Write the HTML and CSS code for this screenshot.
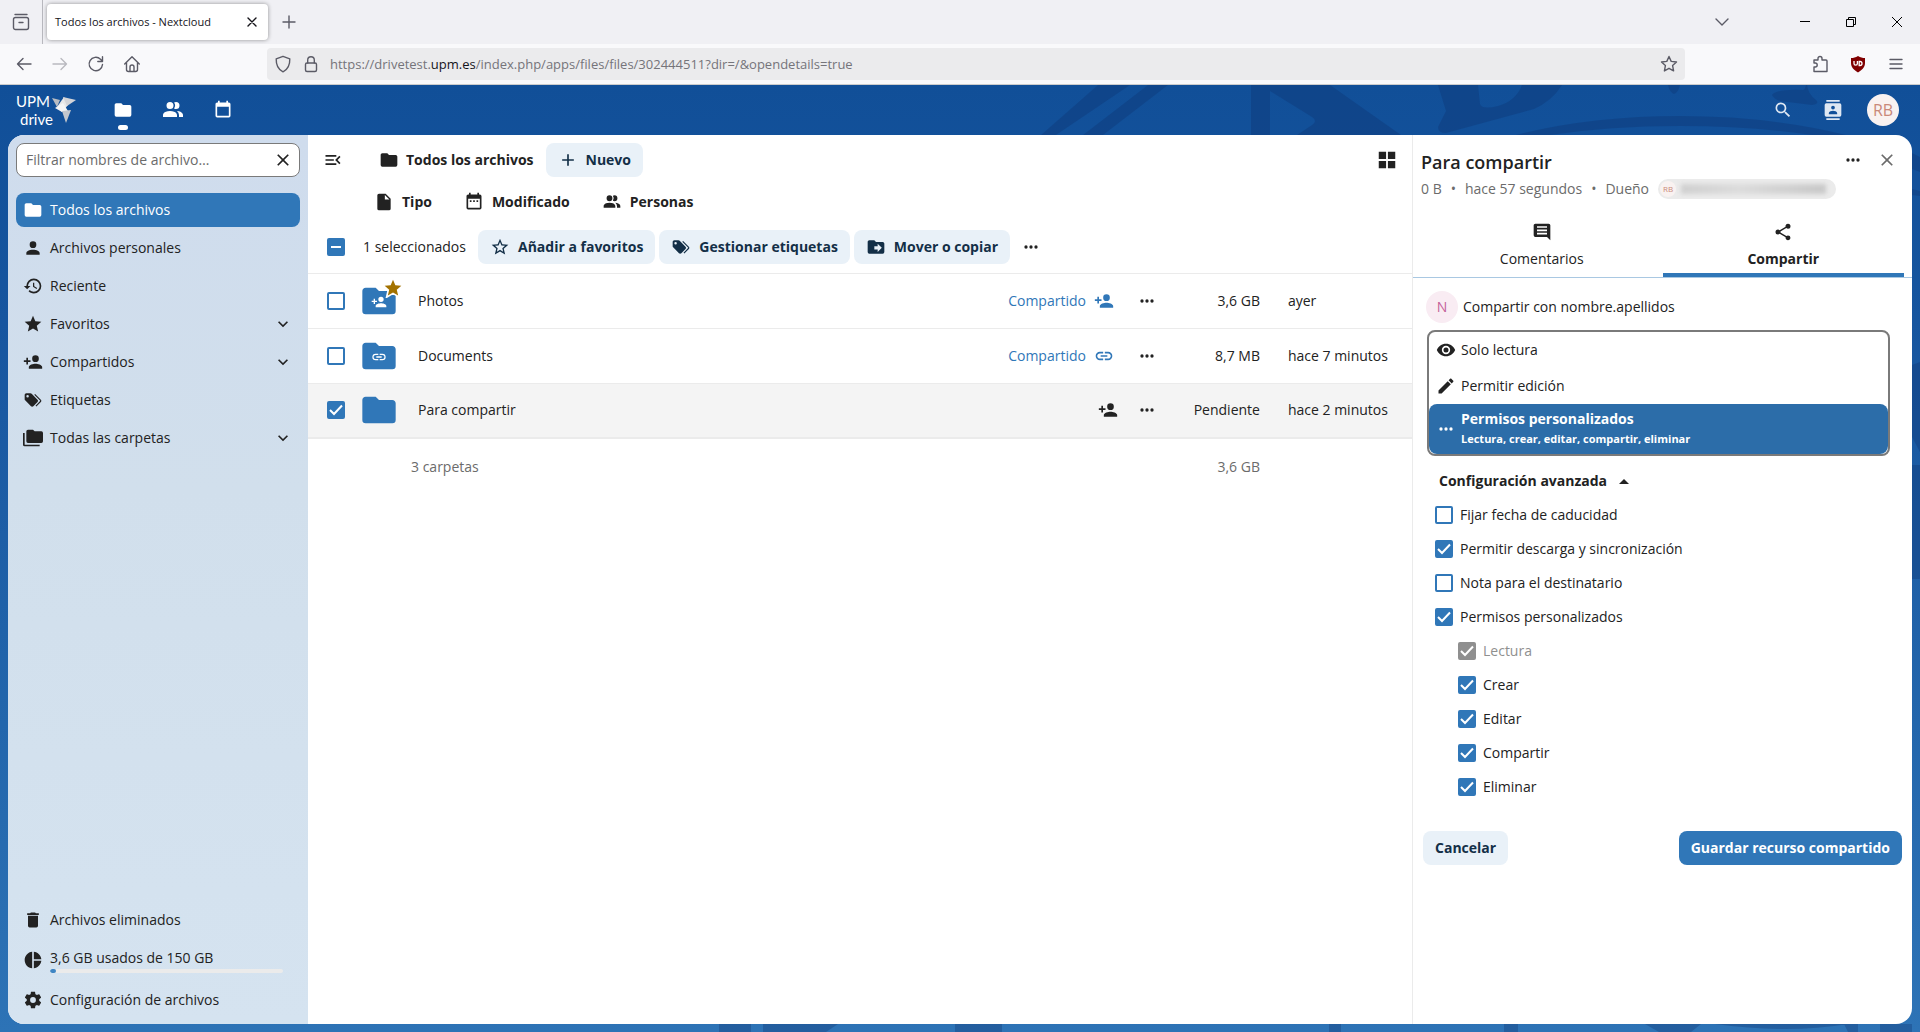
FILE: index.html
```html
<!DOCTYPE html>
<html lang="es">
<head>
    <meta charset="UTF-8">
    <meta name="viewport" content="width=device-width, initial-scale=1.0">
    <title>Todos los archivos - Nextcloud</title>
    <link rel="stylesheet" href="styles.css">
</head>
<body>

    <!-- Icon set -->
    <svg class="icon-set" aria-hidden="true">
        <symbol id="i-folder" viewBox="0 0 24 24"><path d="M10,4H4C2.89,4 2,4.89 2,6V18A2,2 0 0,0 4,20H20A2,2 0 0,0 22,18V8C22,6.89 21.1,6 20,6H12L10,4Z"/></symbol>
        <symbol id="i-account" viewBox="0 0 24 24"><path d="M12,4A4,4 0 0,1 16,8A4,4 0 0,1 12,12A4,4 0 0,1 8,8A4,4 0 0,1 12,4M12,14C16.42,14 20,15.79 20,18V20H4V18C4,15.79 7.58,14 12,14Z"/></symbol>
        <symbol id="i-people" viewBox="0 0 24 24"><path d="M16 17V19H2V17S2 13 9 13 16 17 16 17M12.5 7.5A3.5 3.5 0 1 0 9 11A3.5 3.5 0 0 0 12.5 7.5M15.94 13A5.32 5.32 0 0 1 18 17V19H22V17S22 13.37 15.94 13M15 4A3.39 3.39 0 0 0 13.07 4.59A5 5 0 0 1 13.07 10.41A3.39 3.39 0 0 0 15 11A3.5 3.5 0 0 0 15 4Z"/></symbol>
        <symbol id="i-history" viewBox="0 0 24 24"><path d="M13.5,8H12V13L16.28,15.54L17,14.33L13.5,12.25V8M13,3A9,9 0 0,0 4,12H1L4.96,16.03L9,12H6A7,7 0 0,1 13,5A7,7 0 0,1 20,12A7,7 0 0,1 13,19C11.07,19 9.32,18.21 8.06,16.94L6.64,18.36C8.27,20 10.5,21 13,21A9,9 0 0,0 22,12A9,9 0 0,0 13,3"/></symbol>
        <symbol id="i-star" viewBox="0 0 24 24"><path d="M12,17.27L18.18,21L16.54,13.97L22,9.24L14.81,8.62L12,2L9.19,8.62L2,9.24L7.45,13.97L5.82,21L12,17.27Z"/></symbol>
        <symbol id="i-star-outline" viewBox="0 0 24 24"><path d="M12,15.39L8.24,17.66L9.23,13.38L5.91,10.5L10.29,10.13L12,6.09L13.71,10.13L18.09,10.5L14.77,13.38L15.76,17.66M22,9.24L14.81,8.63L12,2L9.19,8.63L2,9.24L7.45,13.97L5.82,21L12,17.27L18.18,21L16.54,13.97L22,9.24Z"/></symbol>
        <symbol id="i-account-plus" viewBox="0 0 24 24"><path d="M15,14C12.33,14 7,15.33 7,18V20H23V18C23,15.33 17.67,14 15,14M6,10V7H4V10H1V12H4V15H6V12H9V10M15,12A4,4 0 0,0 19,8A4,4 0 0,0 15,4A4,4 0 0,0 11,8A4,4 0 0,0 15,12Z"/></symbol>
        <symbol id="i-tags" viewBox="0 0 24 24"><path d="M5.5,9A1.5,1.5 0 0,0 7,7.5A1.5,1.5 0 0,0 5.5,6A1.5,1.5 0 0,0 4,7.5A1.5,1.5 0 0,0 5.5,9M17.41,11.58C17.77,11.94 18,12.44 18,13C18,13.55 17.78,14.05 17.41,14.41L12.41,19.41C12.05,19.77 11.55,20 11,20C10.45,20 9.95,19.78 9.58,19.41L2.59,12.42C2.22,12.05 2,11.55 2,11V6C2,4.89 2.89,4 4,4H9C9.55,4 10.05,4.22 10.41,4.58L17.41,11.58M13.54,5.71L14.54,4.71L21.41,11.58C21.78,11.94 22,12.45 22,13C22,13.55 21.78,14.05 21.42,14.41L16.04,19.79L15.04,18.79L20.75,13L13.54,5.71Z"/></symbol>
        <symbol id="i-folders" viewBox="0 0 24 24"><path d="M22,4H14L12,2H6A2,2 0 0,0 4,4V16A2,2 0 0,0 6,18H22A2,2 0 0,0 24,16V6A2,2 0 0,0 22,4M2,6H0V11H0V20A2,2 0 0,0 2,22H20V20H2V6Z"/></symbol>
        <symbol id="i-trash" viewBox="0 0 24 24"><path d="M19,4H15.5L14.5,3H9.5L8.5,4H5V6H19M6,19A2,2 0 0,0 8,21H16A2,2 0 0,0 18,19V7H6V19Z"/></symbol>
        <symbol id="i-pie" viewBox="0 0 24 24"><path d="M11,2V22C5.9,21.5 2,17.2 2,12C2,6.8 5.9,2.5 11,2M13,2V11H22C21.5,6.2 17.8,2.5 13,2M13,13V22C17.7,21.5 21.5,17.8 22,13H13Z"/></symbol>
        <symbol id="i-cog" viewBox="0 0 24 24"><path d="M12,15.5A3.5,3.5 0 0,1 8.5,12A3.5,3.5 0 0,1 12,8.5A3.5,3.5 0 0,1 15.5,12A3.5,3.5 0 0,1 12,15.5M19.43,12.97C19.47,12.65 19.5,12.33 19.5,12C19.5,11.67 19.47,11.34 19.43,11L21.54,9.37C21.73,9.22 21.78,8.95 21.66,8.73L19.66,5.27C19.54,5.05 19.27,4.96 19.05,5.05L16.56,6.05C16.04,5.66 15.5,5.32 14.87,5.07L14.5,2.42C14.46,2.18 14.25,2 14,2H10C9.75,2 9.54,2.18 9.5,2.42L9.13,5.07C8.5,5.32 7.96,5.66 7.44,6.05L4.95,5.05C4.73,4.96 4.46,5.05 4.34,5.27L2.34,8.73C2.21,8.95 2.27,9.22 2.46,9.37L4.57,11C4.53,11.34 4.5,11.67 4.5,12C4.5,12.33 4.53,12.65 4.57,12.97L2.46,14.63C2.27,14.78 2.21,15.05 2.34,15.27L4.34,18.73C4.46,18.95 4.73,19.03 4.95,18.95L7.44,17.94C7.96,18.34 8.5,18.68 9.13,18.93L9.5,21.58C9.54,21.82 9.75,22 10,22H14C14.25,22 14.46,21.82 14.5,21.58L14.87,18.93C15.5,18.67 16.04,18.34 16.56,17.94L19.05,18.95C19.27,19.03 19.54,18.95 19.66,18.73L21.66,15.27C21.78,15.05 21.73,14.78 21.54,14.63L19.43,12.97Z"/></symbol>
        <symbol id="i-menu-open" viewBox="0 0 24 24"><path d="M21,15.61L19.59,17L14.58,12L19.59,7L21,8.39L17.44,12L21,15.61M3,6H16V8H3V6M3,13V11H13V13H3M3,18V16H16V18H3Z"/></symbol>
        <symbol id="i-plus" viewBox="0 0 24 24"><path d="M19,13H13V19H11V13H5V11H11V5H13V11H19V13Z"/></symbol>
        <symbol id="i-file" viewBox="0 0 24 24"><path d="M13,9V3.5L18.5,9M6,2C4.89,2 4,2.89 4,4V20A2,2 0 0,0 6,22H18A2,2 0 0,0 20,20V8L14,2H6Z"/></symbol>
        <symbol id="i-calendar" viewBox="0 0 24 24"><path d="M19,19H5V8H19M16,1V3H8V1H6V3H5C3.89,3 3,3.89 3,5V19A2,2 0 0,0 5,21H19A2,2 0 0,0 21,19V5C21,3.89 20.1,3 19,3H18V1"/></symbol>
        <symbol id="i-calendar-range" viewBox="0 0 24 24"><path d="M9,10H7V12H9V10M13,10H11V12H13V10M17,10H15V12H17V10M19,3H18V1H16V3H8V1H6V3H5C3.89,3 3,3.9 3,5V19A2,2 0 0,0 5,21H19A2,2 0 0,0 21,19V5A2,2 0 0,0 19,3M19,19H5V8H19V19Z"/></symbol>
        <symbol id="i-folder-move" viewBox="0 0 24 24"><path d="M14,18V15H10V11H14V8L19,13M20,6H12L10,4H4C2.89,4 2,4.89 2,6V18A2,2 0 0,0 4,20H20A2,2 0 0,0 22,18V8C22,6.89 21.1,6 20,6Z"/></symbol>
        <symbol id="i-dots" viewBox="0 0 24 24"><circle cx="6" cy="12" r="2"/><circle cx="12" cy="12" r="2"/><circle cx="18" cy="12" r="2"/></symbol>
        <symbol id="i-link" viewBox="0 0 24 24"><path d="M3.9,12C3.9,10.29 5.29,8.9 7,8.9H11V7H7A5,5 0 0,0 2,12A5,5 0 0,0 7,17H11V15.1H7C5.29,15.1 3.9,13.71 3.9,12M8,13H16V11H8V13M17,7H13V8.9H17C18.71,8.9 20.1,10.29 20.1,12C20.1,13.71 18.71,15.1 17,15.1H13V17H17A5,5 0 0,0 22,12A5,5 0 0,0 17,7Z"/></symbol>
        <symbol id="i-grid" viewBox="0 0 24 24"><path d="M3,11H11V3H3M3,21H11V13H3M13,21H21V13H13M13,3V11H21V3"/></symbol>
        <symbol id="i-close" viewBox="0 0 24 24"><path d="M19,6.41L17.59,5L12,10.59L6.41,5L5,6.41L10.59,12L5,17.59L6.41,19L12,13.41L17.59,19L19,17.59L13.41,12L19,6.41Z"/></symbol>
        <symbol id="i-comment" viewBox="0 0 24 24"><path fill-rule="evenodd" d="M4,2H20A2,2 0 0,1 22,4V22L18,18H4A2,2 0 0,1 2,16V4C2,2.89 2.9,2 4,2M6,5H18V7H6V5M6,9H18V11H6V9M6,13H18V15H6V13Z"/></symbol>
        <symbol id="i-share" viewBox="0 0 24 24"><path d="M18,16.08C17.24,16.08 16.56,16.38 16.04,16.85L8.91,12.7C8.96,12.47 9,12.24 9,12C9,11.76 8.96,11.53 8.91,11.3L15.96,7.19C16.5,7.69 17.21,8 18,8A3,3 0 0,0 21,5A3,3 0 0,0 18,2A3,3 0 0,0 15,5C15,5.24 15.04,5.47 15.09,5.7L8.04,9.81C7.5,9.31 6.79,9 6,9A3,3 0 0,0 3,12A3,3 0 0,0 6,15C6.79,15 7.5,14.69 8.04,14.19L15.16,18.34C15.11,18.55 15.08,18.77 15.08,19C15.08,20.61 16.39,21.91 18,21.91C19.61,21.91 20.92,20.61 20.92,19A2.92,2.92 0 0,0 18,16.08Z"/></symbol>
        <symbol id="i-eye" viewBox="0 0 24 24"><path d="M12,9A3,3 0 0,0 9,12A3,3 0 0,0 12,15A3,3 0 0,0 15,12A3,3 0 0,0 12,9M12,17A5,5 0 0,1 7,12A5,5 0 0,1 12,7A5,5 0 0,1 17,12A5,5 0 0,1 12,17M12,4.5C7,4.5 2.73,7.61 1,12C2.73,16.39 7,19.5 12,19.5C17,19.5 21.27,16.39 23,12C21.27,7.61 17,4.5 12,4.5Z"/></symbol>
        <symbol id="i-pencil" viewBox="0 0 24 24"><path d="M20.71,7.04C21.1,6.65 21.1,6 20.71,5.63L18.37,3.29C18,2.9 17.35,2.9 16.96,3.29L15.12,5.12L18.87,8.87M3,17.25V21H6.75L17.81,9.93L14.06,6.18L3,17.25Z"/></symbol>
        <symbol id="i-search" viewBox="0 0 24 24"><path d="M9.5,3A6.5,6.5 0 0,1 16,9.5C16,11.11 15.41,12.59 14.44,13.73L14.71,14H15.5L20.5,19L19,20.5L14,15.5V14.71L13.73,14.44C12.59,15.41 11.11,16 9.5,16A6.5,6.5 0 0,1 3,9.5A6.5,6.5 0 0,1 9.5,3M9.5,5C7,5 5,7 5,9.5C5,12 7,14 9.5,14C12,14 14,12 14,9.5C14,7 12,5 9.5,5Z"/></symbol>
        <symbol id="i-contacts" viewBox="0 0 24 24"><path d="M20,0H4V2H20V0M4,24H20V22H4V24M20,4H4A2,2 0 0,0 2,6V18A2,2 0 0,0 4,20H20A2,2 0 0,0 22,18V6A2,2 0 0,0 20,4M12,6.75A2.25,2.25 0 0,1 14.25,9A2.25,2.25 0 0,1 12,11.25A2.25,2.25 0 0,1 9.75,9A2.25,2.25 0 0,1 12,6.75M17,17H7V15.5C7,13.83 10.33,13 12,13C13.67,13 17,13.83 17,15.5V17Z"/></symbol>
        <symbol id="i-chevron" viewBox="0 0 24 24"><path d="M7.41,8.58L12,13.17L16.59,8.58L18,10L12,16L6,10L7.41,8.58Z"/></symbol>
        <symbol id="i-menu-up" viewBox="0 0 20 20"><path d="M5,13L10,8L15,13H5Z"/></symbol>
    </svg>

    <!-- Browser tabs -->
    <div class="tab-bar">
        <button class="chrome-btn recent-btn" aria-label="Ver pestañas recientes">
            <svg class="line-icon" viewBox="0 0 18 18"><path d="M3 1.5h12"/><rect x="1.5" y="4.5" width="15" height="12" rx="2"/><path d="M7 9.5h4"/></svg>
        </button>
        <div class="tab">
            <span class="tab-title">Todos los archivos - Nextcloud</span>
            <button class="chrome-btn tab-close" aria-label="Cerrar pestaña">
                <svg class="line-icon dark" viewBox="0 0 18 18"><path d="M5 5l8 8M13 5l-8 8"/></svg>
            </button>
        </div>
        <button class="chrome-btn new-tab" aria-label="Nueva pestaña">
            <svg class="line-icon" viewBox="0 0 18 18"><path d="M9 3v12M3 9h12"/></svg>
        </button>
        <div class="window-controls">
            <button class="chrome-btn list-tabs" aria-label="Listar pestañas">
                <svg class="line-icon" viewBox="0 0 18 18"><path d="M3 6l6 6 6-6"/></svg>
            </button>
            <button class="chrome-btn" aria-label="Minimizar">
                <svg class="line-icon thin" viewBox="0 0 18 18"><path d="M4 8.5h10"/></svg>
            </button>
            <button class="chrome-btn" aria-label="Restaurar">
                <svg class="line-icon thin" viewBox="0 0 18 18"><path d="M4.5 6.5h7v7h-7zM6.5 6.5v-2h7v7h-2"/></svg>
            </button>
            <button class="chrome-btn" aria-label="Cerrar">
                <svg class="line-icon thin" viewBox="0 0 18 18"><path d="M4 4l10 10M14 4L4 14"/></svg>
            </button>
        </div>
    </div>

    <!-- Browser toolbar -->
    <div class="toolbar">
        <div class="nav-buttons">
            <button class="chrome-btn" aria-label="Atrás">
                <svg class="line-icon" viewBox="0 0 18 18"><path d="M16 9H2.5M8 3.5L2.5 9 8 14.5"/></svg>
            </button>
            <button class="chrome-btn" aria-label="Adelante" disabled>
                <svg class="line-icon" viewBox="0 0 18 18"><path d="M2 9h13.5M10 3.5L15.5 9 10 14.5"/></svg>
            </button>
            <button class="chrome-btn" aria-label="Recargar">
                <svg class="line-icon" viewBox="0 0 18 18"><path d="M15.5 9.5A6.7 6.7 0 1 1 13.5 4.2L15 5.7M15.5 1.8V6.5H10.8"/></svg>
            </button>
            <button class="chrome-btn" aria-label="Inicio">
                <svg class="line-icon" viewBox="0 0 18 18"><path d="M1.7 9L9 1.8 16.3 9M3.5 7.5V14.5a2 2 0 0 0 2 2h7a2 2 0 0 0 2-2V7.5M7 16.5V12a2 2 0 0 1 4 0v4.5"/></svg>
            </button>
        </div>
        <div class="url-bar">
            <svg class="line-icon" viewBox="0 0 18 18"><path d="M9 1.3L15.8 3.8C16 10 14 14.5 9 16.8 4 14.5 2 10 2.2 3.8z"/></svg>
            <svg class="line-icon" viewBox="0 0 18 18"><rect x="3.5" y="8" width="11" height="8.5" rx="1.5"/><path d="M5.7 8V5a3.3 3.3 0 0 1 6.6 0v3"/></svg>
            <div class="url" role="textbox" aria-label="Dirección" contenteditable="true" spellcheck="false">https://drivetest.<span class="url-host">upm.es</span>/index.php/apps/files/files/302444511?dir=/&amp;opendetails=true</div>
            <button class="chrome-btn bookmark" aria-label="Añadir a marcadores">
                <svg class="line-icon" viewBox="0 0 18 18"><path d="M9 1.5l2.2 4.9 5.3.6-3.9 3.600 1 5.300L9 13.300l-4.600 2.600 1-5.300L1.500 7l5.300-.6z"/></svg>
            </button>
        </div>
        <div class="toolbar-end">
            <button class="chrome-btn" aria-label="Extensiones">
                <svg class="line-icon" viewBox="0 0 18 18"><path d="M3 16.5V12h1.200a2 2 0 1 0 0-4H3V5h4V3.500a2 2 0 0 1 4 0V5h4a1 1 0 0 1 1 1v10.500z"/></svg>
            </button>
            <button class="chrome-btn" aria-label="uBlock Origin">
                <svg class="ublock" viewBox="0 0 18 18"><path fill="#800000" d="M9 1C6.5 2.5 4.5 3 2 3v5c0 4.500 3 7 7 9.500 4-2.500 7-5 7-9.500V3C13.500 3 11.500 2.500 9 1z"/><path fill="none" stroke="#fff" stroke-width="1.3" d="M5 6v2.500a1.700 1.700 0 0 0 3.400 0V6M10.200 6.500h.8a2 2 0 0 1 0 4h-.8z"/></svg>
            </button>
            <button class="chrome-btn" aria-label="Menú">
                <svg class="line-icon" viewBox="0 0 18 18"><path d="M3 4.5h12M3 9h12M3 13.5h12"/></svg>
            </button>
        </div>
    </div>

    <!-- Nextcloud -->
    <div class="app">
        <svg class="backdrop" viewBox="0 0 1920 947" preserveAspectRatio="xMaxYMin slice" aria-hidden="true">
            <path d="M1098 0h32L1056 50h-15zM1148 0h20l-65 50h-20z"/>
            <path d="M1251 0h79l71 50h-104l15-10q6-4 0-8L1270 6v44h-19z"/>
            <path fill-rule="evenodd" d="M1438 0h124q-10 16-28 24L1446 48q-8 0-8-6l8-16zM1478 0h44q-6 16-24 21-16 4-18-2z"/>
            <path d="M1668 0h12q-2 8-6 9-4-1-6-9zM1806 0q-1 5-3 5-28-1-31 5 4 7 16 7l24 3q8-1 4-5-8-6-9-15z"/>
            <path d="M1516 50Q1590 31 1680 31T1846 50h-34Q1750 41 1680 41T1550 50z"/>
            <path d="M1912 68l8 4v15l-8-3zM1912 104l8 2v5l-8-1zM1912 280l8-3v90l-8-15zM1912 380h8v114h-8z"/>
            <path d="M719 939h32v8h-32zM763 939h75l-12 8h-63zM955 939h47v8h-47zM1329 939h12v8h-12zM1504 939h14v8h-14zM1645 939h56l-10 8h-32zM1715 939h133q-60 10-133 0zM1844 939h14v8h-10zM1880 939h32v8h-32z"/>
        </svg>

        <header class="app-header">
            <a class="logo" href="#" aria-label="UPM drive">
                <span class="logo-text"><span>UPM</span><span class="logo-drive">drive</span></span>
                <svg class="logo-bird" viewBox="0 0 24 28"><path fill="#b9bcc2" d="M0 2l8 2-3 7z"/><path fill="#e8e8e8" d="M5 11L12 1l4 8-6 7z"/><path fill="#d3d4d8" d="M11 1l13 3-9 6z"/><path fill="#f5f5f5" d="M3 12l8-5 5 8-6 1z"/><path fill="#c4c7cd" d="M10 15l9-1-5 13z"/></svg>
            </a>
            <nav class="app-menu">
                <a class="active" href="#" aria-label="Archivos"><svg class="icon"><use href="#i-folder"/></svg></a>
                <a href="#" aria-label="Contactos"><svg class="icon large"><use href="#i-people"/></svg></a>
                <a href="#" aria-label="Calendario"><svg class="icon"><use href="#i-calendar"/></svg></a>
            </nav>
            <div class="header-end">
                <button aria-label="Buscar"><svg class="icon"><use href="#i-search"/></svg></button>
                <button aria-label="Buscar contactos"><svg class="icon"><use href="#i-contacts"/></svg></button>
                <button class="user-avatar" aria-label="Ajustes">RB</button>
            </div>
        </header>

        <div class="content">
            <!-- Navigation -->
            <nav class="sidebar">
                <div class="filter-box">
                    <input type="text" placeholder="Filtrar nombres de archivo…" aria-label="Filtrar nombres de archivo">
                    <button aria-label="Limpiar"><svg class="icon"><use href="#i-close"/></svg></button>
                </div>
                <ul class="nav-list">
                    <li><a class="active" href="#"><svg class="icon"><use href="#i-folder"/></svg>Todos los archivos</a></li>
                    <li><a href="#"><svg class="icon"><use href="#i-account"/></svg>Archivos personales</a></li>
                    <li><a href="#"><svg class="icon"><use href="#i-history"/></svg>Reciente</a></li>
                    <li><a href="#"><svg class="icon"><use href="#i-star"/></svg>Favoritos<svg class="icon chevron"><use href="#i-chevron"/></svg></a></li>
                    <li><a href="#"><svg class="icon"><use href="#i-account-plus"/></svg>Compartidos<svg class="icon chevron"><use href="#i-chevron"/></svg></a></li>
                    <li><a href="#"><svg class="icon"><use href="#i-tags"/></svg>Etiquetas</a></li>
                    <li><a href="#"><svg class="icon"><use href="#i-folders"/></svg>Todas las carpetas<svg class="icon chevron"><use href="#i-chevron"/></svg></a></li>
                </ul>
                <ul class="nav-list nav-bottom">
                    <li><a href="#"><svg class="icon"><use href="#i-trash"/></svg>Archivos eliminados</a></li>
                    <li>
                        <a class="quota" href="#">
                            <svg class="icon"><use href="#i-pie"/></svg>
                            <span class="quota-body">
                                <span>3,6 GB usados de 150 GB</span>
                                <span class="quota-bar"><span class="quota-used" style="width: 2.4%"></span></span>
                            </span>
                        </a>
                    </li>
                    <li><a href="#"><svg class="icon"><use href="#i-cog"/></svg>Configuración de archivos</a></li>
                </ul>
            </nav>

            <!-- File list -->
            <main class="files">
                <div class="files-header">
                    <button class="icon-btn" aria-label="Cerrar navegación"><svg class="icon"><use href="#i-menu-open"/></svg></button>
                    <a class="crumb" href="#"><svg class="icon"><use href="#i-folder"/></svg>Todos los archivos</a>
                    <button class="btn"><svg class="icon"><use href="#i-plus"/></svg>Nuevo</button>
                    <button class="icon-btn grid-btn" aria-label="Cambiar a vista de cuadrícula"><svg class="icon"><use href="#i-grid"/></svg></button>
                </div>
                <div class="filters">
                    <button><svg class="icon"><use href="#i-file"/></svg>Tipo</button>
                    <button><svg class="icon"><use href="#i-calendar-range"/></svg>Modificado</button>
                    <button><svg class="icon"><use href="#i-people"/></svg>Personas</button>
                </div>

                <table class="file-table">
                    <colgroup>
                        <col class="col-check">
                        <col class="col-icon">
                        <col>
                        <col class="col-actions">
                        <col class="col-size">
                        <col class="col-mtime">
                    </colgroup>
                    <thead>
                        <tr>
                            <th class="cell-check"><input type="checkbox" class="mixed" aria-label="Seleccionar todo"></th>
                            <th colspan="5">
                                <div class="bulk-actions">
                                    <span class="selected-count">1 seleccionados</span>
                                    <button class="btn"><svg class="icon"><use href="#i-star-outline"/></svg>Añadir a favoritos</button>
                                    <button class="btn"><svg class="icon"><use href="#i-tags"/></svg>Gestionar etiquetas</button>
                                    <button class="btn"><svg class="icon"><use href="#i-folder-move"/></svg>Mover o copiar</button>
                                    <button class="icon-btn" aria-label="Acciones"><svg class="icon"><use href="#i-dots"/></svg></button>
                                </div>
                            </th>
                        </tr>
                    </thead>
                    <tbody>
                        <tr>
                            <td class="cell-check"><input type="checkbox" aria-label="Seleccionar Photos"></td>
                            <td>
                                <span class="folder">
                                    <svg class="folder-icon"><use href="#i-folder"/></svg>
                                    <svg class="folder-overlay"><use href="#i-account-plus"/></svg>
                                    <svg class="folder-star"><use href="#i-star"/></svg>
                                </span>
                            </td>
                            <td><a class="file-name" href="#">Photos</a></td>
                            <td>
                                <div class="row-actions">
                                    <button class="shared">Compartido<svg class="icon"><use href="#i-account-plus"/></svg></button>
                                    <button class="icon-btn" aria-label="Acciones"><svg class="icon"><use href="#i-dots"/></svg></button>
                                </div>
                            </td>
                            <td class="cell-size">3,6 GB</td>
                            <td class="cell-mtime">ayer</td>
                        </tr>
                        <tr>
                            <td class="cell-check"><input type="checkbox" aria-label="Seleccionar Documents"></td>
                            <td>
                                <span class="folder">
                                    <svg class="folder-icon"><use href="#i-folder"/></svg>
                                    <svg class="folder-overlay"><use href="#i-link"/></svg>
                                </span>
                            </td>
                            <td><a class="file-name" href="#">Documents</a></td>
                            <td>
                                <div class="row-actions">
                                    <button class="shared">Compartido<svg class="icon"><use href="#i-link"/></svg></button>
                                    <button class="icon-btn" aria-label="Acciones"><svg class="icon"><use href="#i-dots"/></svg></button>
                                </div>
                            </td>
                            <td class="cell-size">8,7 MB</td>
                            <td class="cell-mtime">hace 7 minutos</td>
                        </tr>
                        <tr class="selected">
                            <td class="cell-check"><input type="checkbox" aria-label="Seleccionar Para compartir" checked></td>
                            <td>
                                <span class="folder">
                                    <svg class="folder-icon"><use href="#i-folder"/></svg>
                                </span>
                            </td>
                            <td><a class="file-name" href="#">Para compartir</a></td>
                            <td>
                                <div class="row-actions">
                                    <button class="icon-btn" aria-label="Compartir"><svg class="icon"><use href="#i-account-plus"/></svg></button>
                                    <button class="icon-btn" aria-label="Acciones"><svg class="icon"><use href="#i-dots"/></svg></button>
                                </div>
                            </td>
                            <td class="cell-size">Pendiente</td>
                            <td class="cell-mtime">hace 2 minutos</td>
                        </tr>
                    </tbody>
                    <tfoot>
                        <tr>
                            <td></td>
                            <td colspan="3" class="summary">3 carpetas</td>
                            <td class="cell-size">3,6 GB</td>
                            <td></td>
                        </tr>
                    </tfoot>
                </table>
            </main>

            <!-- Details -->
            <aside class="details">
                <div class="details-title">
                    <h2>Para compartir</h2>
                    <button class="icon-btn" aria-label="Acciones"><svg class="icon"><use href="#i-dots"/></svg></button>
                    <button class="icon-btn close-btn" aria-label="Cerrar barra lateral"><svg class="icon"><use href="#i-close"/></svg></button>
                </div>
                <div class="details-sub">
                    <span>0 B</span><span>•</span><span>hace 57 segundos</span><span>•</span><span>Dueño</span>
                    <span class="owner"><span class="owner-avatar">RB</span><span class="owner-name"></span></span>
                </div>
                <div class="tabs" role="tablist">
                    <button role="tab" aria-selected="false"><svg class="icon"><use href="#i-comment"/></svg>Comentarios</button>
                    <button role="tab" aria-selected="true"><svg class="icon"><use href="#i-share"/></svg>Compartir</button>
                </div>

                <form class="share-form">
                    <div class="share-target">
                        <span class="target-avatar">N</span>
                        <span>Compartir con nombre.apellidos</span>
                    </div>
                    <div class="permissions">
                        <button type="button"><svg class="icon"><use href="#i-eye"/></svg>Solo lectura</button>
                        <button type="button"><svg class="icon"><use href="#i-pencil"/></svg>Permitir edición</button>
                        <button type="button" class="chosen">
                            <svg class="icon"><use href="#i-dots"/></svg>
                            <span class="chosen-text">Permisos personalizados<small>Lectura, crear, editar, compartir, eliminar</small></span>
                        </button>
                    </div>
                    <button type="button" class="advanced">Configuración avanzada<svg class="icon"><use href="#i-menu-up"/></svg></button>
                    <div class="options">
                        <label><input type="checkbox">Fijar fecha de caducidad</label>
                        <label><input type="checkbox" checked>Permitir descarga y sincronización</label>
                        <label><input type="checkbox">Nota para el destinatario</label>
                        <label><input type="checkbox" checked>Permisos personalizados</label>
                        <div class="sub-options">
                            <label class="disabled"><input type="checkbox" checked disabled>Lectura</label>
                            <label><input type="checkbox" checked>Crear</label>
                            <label><input type="checkbox" checked>Editar</label>
                            <label><input type="checkbox" checked>Compartir</label>
                            <label><input type="checkbox" checked>Eliminar</label>
                        </div>
                    </div>
                    <div class="form-buttons">
                        <button type="button" class="btn">Cancelar</button>
                        <button type="submit" class="btn primary">Guardar recurso compartido</button>
                    </div>
                </form>
            </aside>
        </div>
    </div>

</body>
</html>
```

FILE: styles.css
```css
* {
    box-sizing: border-box;
}

body {
    margin: 0;
    height: 100vh;
    display: flex;
    flex-direction: column;
    overflow: hidden;
    font-family: "Open Sans", "Noto Sans", sans-serif;
    font-size: 14px;
    line-height: 20px;
    color: #222;
}

button, input {
    font: inherit;
    color: inherit;
}

button {
    padding: 0;
    border: none;
    background: none;
    cursor: pointer;
}

a {
    color: inherit;
    text-decoration: none;
}

.icon-set {
    display: none;
}

.icon {
    width: 20px;
    height: 20px;
    flex: none;
    fill: currentColor;
}

.icon.large {
    width: 24px;
    height: 24px;
}

/* Browser tabs */
.chrome-btn {
    width: 36px;
    height: 32px;
    display: flex;
    align-items: center;
    justify-content: center;
    flex: none;
    color: #5b5b66;
}

.chrome-btn:disabled {
    opacity: 0.4;
}

.line-icon {
    width: 18px;
    height: 18px;
    flex: none;
    fill: none;
    stroke: #5b5b66;
    stroke-width: 1.4;
    stroke-linecap: round;
    stroke-linejoin: round;
}

.line-icon.dark {
    stroke: #15141a;
}

.line-icon.thin {
    stroke: #000;
    stroke-width: 1;
    stroke-linecap: butt;
    stroke-linejoin: miter;
}

.tab-bar {
    height: 44px;
    flex: none;
    display: flex;
    align-items: center;
    background-color: #f0f0f4;
}

.recent-btn {
    width: 43px;
    height: 44px;
    border-right: 1px solid #b8b8be;
}

.tab {
    width: 221px;
    height: 36px;
    margin: 0 3px 0 4px;
    padding: 0 0 0 8px;
    display: flex;
    align-items: center;
    justify-content: space-between;
    border-radius: 4px;
    background-color: #fff;
    box-shadow: 0 0 4px rgba(0, 0, 0, 0.4);
}

.tab-title {
    font-size: 11px;
    color: #15141a;
}

.tab-close {
    width: 32px;
}

.window-controls {
    margin-left: auto;
    display: flex;
}

.window-controls .chrome-btn {
    width: 46px;
}

.window-controls .list-tabs {
    margin-right: 37px;
}

/* Browser toolbar */
.toolbar {
    height: 41px;
    flex: none;
    display: flex;
    align-items: center;
    background-color: #f9f9fb;
    border-bottom: 1px solid #ccc;
}

.nav-buttons {
    width: 267px;
    padding-left: 6px;
    display: flex;
}

.url-bar {
    flex: 1;
    height: 32px;
    padding: 0 0 0 7px;
    display: flex;
    align-items: center;
    gap: 10px;
    border-radius: 4px;
    background-color: #ebebed;
}

.url {
    flex: 1;
    font-size: 13px;
    color: #75747a;
    white-space: nowrap;
}

.url-host {
    color: #15141a;
}

.bookmark {
    width: 32px;
}

.toolbar-end {
    width: 235px;
    padding-right: 6px;
    display: flex;
    justify-content: flex-end;
    gap: 2px;
}

.ublock {
    width: 18px;
    height: 18px;
}

/* App shell */
.app {
    position: relative;
    flex: 1;
    min-height: 0;
    display: flex;
    flex-direction: column;
    background: linear-gradient(#114f98, #16559f 25%, #2d73b6);
}

.backdrop {
    position: absolute;
    inset: 0;
    width: 100%;
    height: 100%;
    fill: #0d2f6b;
    fill-opacity: 0.3;
}

.app-header {
    position: relative;
    height: 50px;
    flex: none;
    padding: 0 12px 0 16px;
    display: flex;
    align-items: center;
    color: #fff;
}

.logo {
    width: 82px;
    display: flex;
    align-items: center;
}

.logo-text {
    width: 36px;
    display: flex;
    flex-direction: column;
    font-family: Lato, sans-serif;
    font-size: 15px;
    font-weight: 400;
    line-height: 18px;
}

.logo-drive {
    padding-left: 4px;
}

.logo-bird {
    width: 24px;
    height: 28px;
}

.app-menu {
    display: flex;
}

.app-menu a {
    width: 50px;
    height: 50px;
    display: flex;
    flex-direction: column;
    align-items: center;
    justify-content: center;
}

.app-menu .active {
    gap: 5px;
    padding-top: 10px;
}

.app-menu .active::after {
    content: "";
    width: 10px;
    height: 5px;
    border-radius: 3px;
    background-color: #fff;
}

.header-end {
    margin-left: auto;
    display: flex;
    align-items: center;
}

.header-end button {
    width: 50px;
    height: 50px;
    display: flex;
    align-items: center;
    justify-content: center;
    color: #dfe8f3;
}

.header-end .user-avatar {
    width: 32px;
    height: 32px;
    margin: 0 9px;
    border-radius: 50%;
    background-color: #f9f2f1;
    color: #c98879;
    font-size: 16px;
}

.content {
    position: relative;
    flex: 1;
    min-height: 0;
    margin: 0 8px 8px;
    display: flex;
    border-radius: 16px;
    overflow: hidden;
    background-color: #fff;
}

/* Sidebar */
.sidebar {
    width: 300px;
    flex: none;
    padding: 8px 8px 7px;
    display: flex;
    flex-direction: column;
    background: linear-gradient(#cfdced, #d1dfec 40%, #d5e3f0);
}

.filter-box {
    height: 34px;
    margin-bottom: 16px;
    display: flex;
    align-items: center;
    border: 1px solid #7a7a7a;
    border-radius: 8px;
    background-color: #fff;
}

.filter-box input {
    flex: 1;
    min-width: 0;
    padding: 0 9px;
    border: none;
    outline: none;
    background: none;
}

.filter-box input::placeholder {
    color: #6b6b6b;
}

.filter-box button {
    width: 32px;
    height: 32px;
    display: flex;
    align-items: center;
    justify-content: center;
}

.nav-list {
    margin: 0;
    padding: 0;
    list-style: none;
    display: flex;
    flex-direction: column;
    gap: 4px;
}

.nav-list a {
    height: 34px;
    padding: 0 7px;
    display: flex;
    align-items: center;
    gap: 7px;
    border-radius: 8px;
}

.nav-list .active {
    background-color: #3077b8;
    color: #fff;
}

.chevron {
    margin-left: auto;
}

.nav-bottom {
    margin-top: auto;
}

.nav-list .quota {
    height: 38px;
}

.quota-body {
    flex: 1;
    margin-right: 10px;
    display: flex;
    flex-direction: column;
    gap: 1px;
}

.quota-bar {
    height: 4px;
    border-radius: 2px;
    background-color: #ebebeb;
    overflow: hidden;
}

.quota-used {
    display: block;
    height: 4px;
    border-radius: 2px;
    background-color: #3f86c4;
}

/* Buttons */
.btn {
    height: 34px;
    padding: 0 12px;
    display: flex;
    align-items: center;
    gap: 8px;
    border-radius: 8px;
    background-color: #e9f1f8;
    color: #132f47;
    font-weight: 700;
    white-space: nowrap;
}

.btn.primary {
    background-color: #3077b8;
    color: #fff;
}

.icon-btn {
    width: 34px;
    height: 34px;
    display: flex;
    align-items: center;
    justify-content: center;
    flex: none;
}

/* Checkboxes */
input[type="checkbox"] {
    appearance: none;
    width: 18px;
    height: 18px;
    flex: none;
    margin: 0;
    border: 2px solid #3077b8;
    border-radius: 2px;
    background: #fff center / 18px 18px no-repeat;
}

input[type="checkbox"]:checked {
    background-color: #3077b8;
    background-image: url("data:image/svg+xml,%3Csvg xmlns='http://www.w3.org/2000/svg' viewBox='0 0 18 18'%3E%3Cpath d='M3 9l4 4 8-8.5' fill='none' stroke='%23fff' stroke-width='2'/%3E%3C/svg%3E");
}

input[type="checkbox"].mixed {
    background-color: #3077b8;
    background-image: url("data:image/svg+xml,%3Csvg xmlns='http://www.w3.org/2000/svg' viewBox='0 0 18 18'%3E%3Cpath d='M4 9h10' stroke='%23fff' stroke-width='2'/%3E%3C/svg%3E");
}

input[type="checkbox"]:disabled {
    border-color: #8f8f8f;
    background-color: #8f8f8f;
}

/* File list */
.files {
    flex: 1;
    min-width: 0;
    padding-top: 8px;
}

.files-header {
    height: 34px;
    padding: 0 8px;
    display: flex;
    align-items: center;
}

.crumb {
    margin: 0 12px 0 29px;
    display: flex;
    align-items: center;
    gap: 7px;
    font-weight: 700;
}

.grid-btn {
    margin-left: auto;
}

.grid-btn .icon {
    width: 22px;
    height: 22px;
}

.filters {
    height: 50px;
    padding: 0 66px;
    display: flex;
    align-items: center;
    gap: 32px;
}

.filters button {
    display: flex;
    align-items: center;
    gap: 8px;
    font-weight: 700;
}

.file-table {
    width: 100%;
    table-layout: fixed;
    border-collapse: collapse;
}

.col-check,
.col-icon {
    width: 55px;
}

.col-actions {
    width: 240px;
}

.col-size {
    width: 110px;
}

.col-mtime {
    width: 138px;
}

.file-table th,
.file-table td {
    height: 55px;
    padding: 0;
    border-bottom: 1px solid #ebebeb;
    text-align: left;
    font-weight: 400;
    white-space: nowrap;
}

.file-table th {
    height: 46px;
    padding-bottom: 6px;
}

.file-table .cell-check {
    padding-left: 19px;
}

.cell-check input {
    display: block;
}

.bulk-actions {
    display: flex;
    align-items: center;
    gap: 4px;
}

.selected-count {
    margin-right: 8px;
}

.file-table .selected td {
    border-bottom: 2px solid #ebebeb;
    background-color: #f4f4f4;
}

.folder {
    position: relative;
    width: 32px;
    height: 40px;
    display: block;
}

/* the glyph fills only 20 of its 24 units */
.folder-icon {
    width: 40px;
    height: 40px;
    margin-left: -4px;
    fill: #3077b8;
}

.folder-overlay {
    position: absolute;
    top: 13px;
    left: 8px;
    width: 16px;
    height: 16px;
    fill: #fff;
}

.folder-star {
    position: absolute;
    top: -3px;
    left: 20px;
    width: 20px;
    height: 20px;
    fill: #a37200;
    stroke: #fff;
    stroke-width: 4px;
    paint-order: stroke;
}

.row-actions {
    display: flex;
    justify-content: flex-end;
    align-items: center;
    gap: 5px;
}

.shared {
    padding-right: 11px;
    display: flex;
    align-items: center;
    gap: 8px;
    color: #3077b8;
}

.file-table .cell-size {
    padding-right: 14px;
    text-align: right;
}

.file-table .cell-mtime {
    padding-left: 14px;
}

.file-table tfoot td {
    padding-top: 2px;
    border-bottom: none;
    color: #6b6b6b;
}

.file-table .summary {
    padding-left: 48px;
}

/* Details panel */
.details {
    width: clamp(300px, 27vw, 500px);
    flex: none;
    border-left: 1px solid #ebebeb;
}

.details-title {
    padding: 8px 8px 0;
    display: flex;
    align-items: center;
}

.details-title h2 {
    flex: 1;
    margin: 0;
    padding-top: 4px;
    font-size: 18px;
    font-weight: 600;
    line-height: 30px;
}

.close-btn {
    color: #6b6b6b;
}

.details-sub {
    height: 24px;
    padding: 0 8px;
    display: flex;
    align-items: center;
    gap: 9px;
    color: #6b6b6b;
}

.owner {
    width: 178px;
    height: 20px;
    padding: 0 10px 0 2px;
    display: flex;
    align-items: center;
    gap: 5px;
    border-radius: 10px;
    background-color: #ebebeb;
}

.owner-avatar {
    width: 16px;
    height: 16px;
    border-radius: 50%;
    background-color: #f9f2f1;
    color: #c98879;
    font-size: 8px;
    line-height: 16px;
    text-align: center;
}

.owner-name {
    flex: 1;
    height: 10px;
    background: linear-gradient(90deg, #d0d0d0, #dcdcdc 40%, #c8c8c8);
    filter: blur(2px);
}

.tabs {
    margin-top: 10px;
    padding: 0 8px;
    display: flex;
    border-bottom: 1px solid #a9c8e2;
}

.tabs button {
    flex: 1;
    height: 66px;
    padding-top: 11px;
    display: flex;
    flex-direction: column;
    align-items: center;
    gap: 7px;
    border-bottom: 4px solid transparent;
}

.tabs button[aria-selected="true"] {
    border-bottom-color: #3077b8;
    font-weight: 700;
}

.share-form {
    padding: 13px 10px 0;
}

.share-target {
    padding: 0 3px;
    display: flex;
    align-items: center;
    gap: 5px;
}

.target-avatar {
    width: 32px;
    height: 32px;
    border-radius: 50%;
    background-color: #f9ecf3;
    color: #c4609a;
    line-height: 32px;
    text-align: center;
}

.permissions {
    margin: 7px 12px 0 4px;
    display: flex;
    flex-direction: column;
    border: 2px solid #7a7a7a;
    border-radius: 8px;
}

.permissions button {
    height: 36px;
    padding: 0 7px;
    display: flex;
    align-items: center;
    gap: 5px;
    text-align: left;
}

.permissions .chosen {
    height: 50px;
    border-radius: 8px;
    background-color: #2c6da9;
    color: #fff;
    font-weight: 700;
}

.chosen-text {
    display: flex;
    flex-direction: column;
}

.chosen-text small {
    font-size: 11px;
    line-height: 20px;
}

.advanced {
    height: 34px;
    margin-top: 8px;
    padding: 0 16px;
    display: flex;
    align-items: center;
    gap: 7px;
    font-weight: 700;
}

.options {
    padding: 0 12px;
}

.options label {
    height: 34px;
    display: flex;
    align-items: center;
    gap: 7px;
}

.sub-options {
    padding-left: 23px;
}

.options .disabled {
    color: #8f8f8f;
}

.form-buttons {
    margin-top: 27px;
    display: flex;
    justify-content: space-between;
}
```
